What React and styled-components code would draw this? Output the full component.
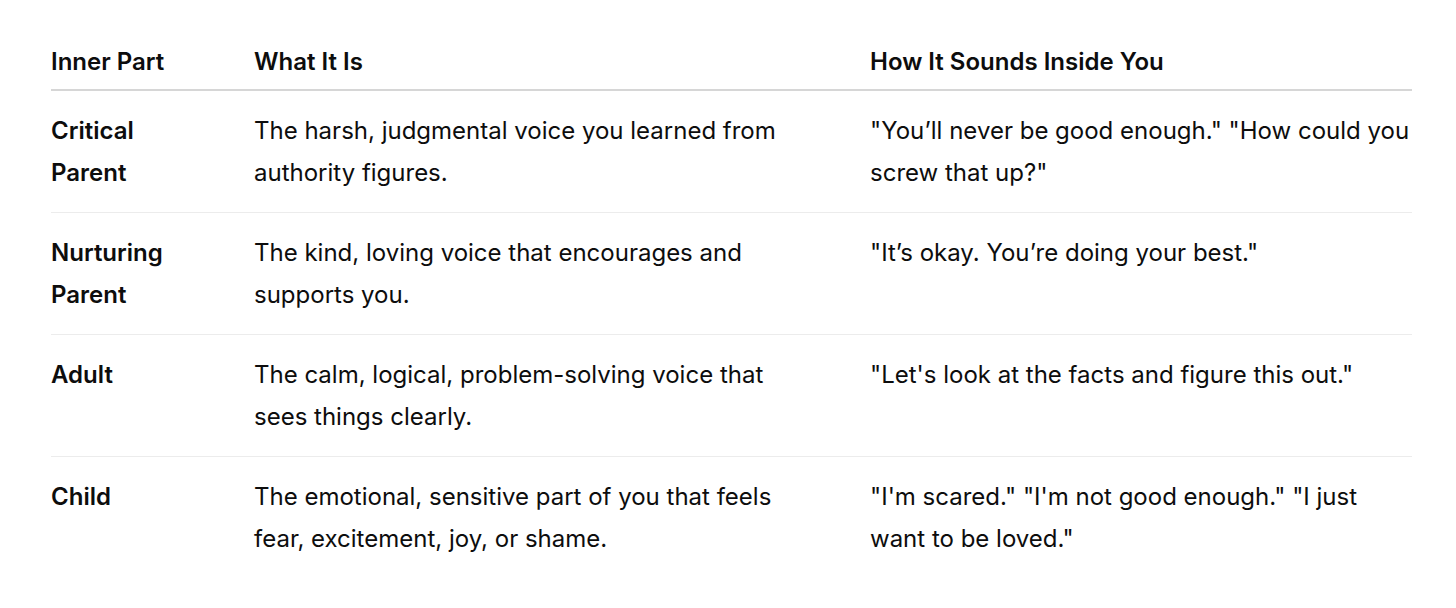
import React from 'react';
import styled, { createGlobalStyle } from 'styled-components';

const GlobalStyle = createGlobalStyle`
  html, body {
    margin: 0;
    padding: 0;
    background: #ffffff;
  }
  body {
    font-family: Inter, "Noto Sans", "Liberation Sans", sans-serif;
    color: #0d0d0d;
  }
`

const Page = styled.div`
  padding: 41px 44px 0 51px;
  width: 1456px;
  box-sizing: border-box;
`

const Table = styled.table`
  width: 1361px;
  border-collapse: collapse;
  table-layout: fixed;
  font-size: 24px;
  line-height: 42px;
`

const HeadCell = styled.th`
  box-sizing: border-box;
  width: ${p => p.w}px;
  text-align: left;
  font-weight: 600;
  padding: 0 30px 6px 24px;
  border-bottom: 2px solid #d6d6d6;
  vertical-align: bottom;
  &:first-child { padding-left: 0; }
  &:last-child { padding-right: 0; }
`

const Row = styled.tr`
  border-bottom: ${p => (p.last ? 'none' : '1px solid #ececec')};
`

const Cell = styled.td`
  box-sizing: border-box;
  padding: 19px 30px 18px 24px;
  vertical-align: top;
  font-weight: ${p => (p.strong ? 600 : 400)};
  &:first-child { padding-left: 0; }
  &:last-child { padding-right: 0; }
`

const rows = [
  {
    part: 'Critical Parent',
    what: 'The harsh, judgmental voice you learned from authority figures.',
    sound: '"You\u2019ll never be good enough." "How could you screw that up?"',
  },
  {
    part: 'Nurturing Parent',
    what: 'The kind, loving voice that encourages and supports you.',
    sound: '"It\u2019s okay. You\u2019re doing your best."',
  },
  {
    part: 'Adult',
    what: 'The calm, logical, problem-solving voice that sees things clearly.',
    sound: '"Let\'s look at the facts and figure this out."',
  },
  {
    part: 'Child',
    what: 'The emotional, sensitive part of you that feels fear, excitement, joy, or shame.',
    sound: '"I\'m scared." "I\'m not good enough." "I just want to be loved."',
  },
]

export default function App() {
  return (
    <>
      <GlobalStyle />
      <Page>
        <Table>
          <thead>
            <tr>
              <HeadCell w={179}>Inner Part</HeadCell>
              <HeadCell w={616}>What It Is</HeadCell>
              <HeadCell w={566}>How It Sounds Inside You</HeadCell>
            </tr>
          </thead>
          <tbody>
            {rows.map((r, i) => (
              <Row key={r.part} last={i === rows.length - 1}>
                <Cell strong>{r.part}</Cell>
                <Cell>{r.what}</Cell>
                <Cell>{r.sound}</Cell>
              </Row>
            ))}
          </tbody>
        </Table>
      </Page>
    </>
  )
}
